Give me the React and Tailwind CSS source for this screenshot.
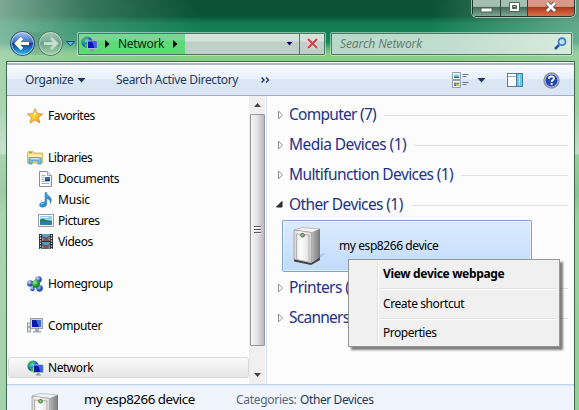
import React from "react";

const NetworkIcon = () => (
  <svg width="17" height="16" viewBox="0 0 17 16">
    <defs>
      <radialGradient id="globe" cx="35%" cy="30%">
        <stop offset="0" stopColor="#bdf3ff" />
        <stop offset=".5" stopColor="#2a9fdc" />
        <stop offset="1" stopColor="#1256a8" />
      </radialGradient>
    </defs>
    <circle cx="6" cy="6" r="5.6" fill="url(#globe)" />
    <path d="M1 4 Q3 1 6 .8 L7 2.5 4.500 4 4 6 1.500 6.500Z M3 8 L6 8 6.500 11 4 10.800Z" fill="#39b54a" />
    <rect x="6" y="4.500" width="10.500" height="8.500" fill="#a9b8d8" />
    <rect x="7" y="5.500" width="8.500" height="6.500" fill="#0c17b5" />
    <path d="M11 5.500h4.500v6.500h-2z" fill="#3d62e6" />
    <path d="M10 13h2.500v1.500h1.500v1h-5.500v-1h1.500z" fill="#8d98a8" />
  </svg>
);

const StarIcon = () => (
  <svg width="16" height="16" viewBox="0 0 16 16">
    <defs>
      <linearGradient id="star" x1="0" y1="0" x2="1" y2="1">
        <stop offset="0" stopColor="#ffe95c" />
        <stop offset=".5" stopColor="#ffd23a" />
        <stop offset="1" stopColor="#fb8b16" />
      </linearGradient>
    </defs>
    <path d="M8 .8 10 5.700 15.500 6 11.300 9.500 12.900 15 8 11.900 3.100 15 4.700 9.500 .5 6 6 5.700Z" fill="url(#star)" stroke="#e88420" strokeWidth=".9" strokeLinejoin="round" />
    <path d="M8 3 9.200 6.700 6 7Z" fill="#fff6b0" />
  </svg>
);

const LibrariesIcon = () => (
  <svg width="16" height="16" viewBox="0 0 16 16">
    <path d="M.5 13V2.500L1.500 1.500H6L7 3H15.500V13Z" fill="#f3d878" stroke="#cfae4e" strokeWidth=".8" />
    <path d="M1.500 4.500h13V7h-13z" fill="#fff0ae" />
    <path d="M2 2.600h3" stroke="#61b44b" strokeWidth="1" />
    <path d="M2 14V9Q2 7.500 3.500 7.500H12.500Q14 7.500 14 9V14H11V10.800H5V14Z" fill="#6dc0ea" stroke="#4a9ccc" strokeWidth=".9" />
    <path d="M3.500 8.700h9" stroke="#d5f2ff" />
  </svg>
);

const DocumentIcon = () => (
  <svg width="15" height="16" viewBox="0 0 15 16">
    <path d="M1.500 .5H9.500L13.500 4.500V15.500H1.500Z" fill="#fff" stroke="#8b8f94" />
    <path d="M9.500 .5V4.500H13.500" fill="#e9ecf0" stroke="#8b8f94" strokeWidth=".8" />
    <path d="M3.500 4.500h4M3.500 6.500h3M3.500 8.500h3M3.500 10.500h8M3.500 12.500h8" stroke="#9aa5c2" strokeWidth=".9" />
    <rect x="7" y="6" width="5" height="4" fill="#2f6fc0" />
    <path d="M7 10V8L9 9 12 7.500V10Z" fill="#16447f" />
  </svg>
);

const MusicIcon = () => (
  <svg width="16" height="16" viewBox="0 0 16 16">
    <defs>
      <linearGradient id="note" x1="0" y1="0" x2="1" y2="1">
        <stop offset="0" stopColor="#57bdf4" />
        <stop offset="1" stopColor="#1476bd" />
      </linearGradient>
    </defs>
    <path d="M7 .5H8.500Q9 3 11.500 4.500 14.800 7 12.300 11.500 13 7.500 8.700 6.500V12Q8.500 14.800 5 15.200 1.500 15.300 1.500 13 1.800 10.200 5.500 10L7 10.300Z" fill="url(#note)" stroke="#1872b3" strokeWidth=".5" />
    <path d="M3 12Q4 11 5.500 11.200" stroke="#a9e3ff" fill="none" />
  </svg>
);

const PictureIcon = () => (
  <svg width="16" height="13" viewBox="0 0 16 13">
    <rect x=".5" y=".5" width="15" height="12" fill="#fff" stroke="#969da3" />
    <rect x="2" y="2" width="12" height="9" fill="#8fd2f2" />
    <path d="M2 5.500Q5 4 8 6L14 7V8H2Z" fill="#2d7b61" />
    <path d="M2 8h12v3H2z" fill="#2580b5" />
    <path d="M2 3.500h8" stroke="#d8f3ff" />
  </svg>
);

const VideoIcon = () => (
  <svg width="14" height="15" viewBox="0 0 14 15">
    <rect width="14" height="15" fill="#2c3033" />
    <rect x="3" y="0" width="8" height="7" fill="#4ea6db" />
    <rect x="3" y="8" width="8" height="7" fill="#4a9bd0" />
    <path d="M3 1 5 3 9 3 11 1V3L9 5 11 7H3L5 5 3 3ZM3 9 6 11 9 11 11 9V11L9 13 10 15H4L5 13 3 11Z" fill="#7d5546" />
    <path d="M1.500 1v14M12.500 1v14" stroke="#e3e8ea" strokeWidth="1.200" strokeDasharray="1.300 1.300" />
  </svg>
);

const HomegroupIcon = () => (
  <svg width="16" height="16" viewBox="0 0 16 16">
    <defs>
      <radialGradient id="blueBall" cx="35%" cy="30%">
        <stop offset="0" stopColor="#c6dcfa" />
        <stop offset="1" stopColor="#2b51b5" />
      </radialGradient>
      <radialGradient id="greenBall" cx="35%" cy="30%">
        <stop offset="0" stopColor="#a6efa0" />
        <stop offset="1" stopColor="#178d2b" />
      </radialGradient>
    </defs>
    <circle cx="11.500" cy="3.500" r="3.300" fill="url(#blueBall)" />
    <circle cx="3.300" cy="7.500" r="3.200" fill="url(#blueBall)" />
    <circle cx="12.500" cy="12.300" r="3.400" fill="url(#blueBall)" />
    <circle cx="5.500" cy="13" r="2.300" fill="url(#blueBall)" />
    <circle cx="9" cy="8" r="4" fill="url(#greenBall)" />
  </svg>
);

const ComputerIcon = () => (
  <svg width="16" height="15" viewBox="0 0 16 15">
    <rect x=".5" y="5" width="3" height="9" fill="#d7d9d8" stroke="#909593" strokeWidth=".8" />
    <path d="M2 8v2" stroke="#36b336" />
    <rect x="3.500" y=".5" width="12" height="10" fill="#d0d3d5" stroke="#9ca0a4" />
    <rect x="5" y="2" width="9" height="7" fill="#0c19b0" />
    <path d="M9 2h5v7h-2z" fill="#4169df" />
    <path d="M8 11h4v2h2v1.500H6V13h2z" fill="#a5a9ad" />
  </svg>
);

const DeviceIcon = () => (
  <svg width="36" height="40" viewBox="0 0 36 40">
    <defs>
      <linearGradient id="front">
        <stop offset="0" stopColor="#d2d2d2" />
        <stop offset=".35" stopColor="#fff" />
        <stop offset="1" stopColor="#dadada" />
      </linearGradient>
      <linearGradient id="side">
        <stop offset="0" stopColor="#bcbcbc" />
        <stop offset="1" stopColor="#777" />
      </linearGradient>
    </defs>
    <path d="M20 38 34 27 29 28 25 31Z" fill="#64748b" opacity=".25" />
    <path d="M2 33 19 37 28 31V34L19 39 2 35.500Z" fill="#444" />
    <path d="M2 4 10 1.500 28 3 20 6.500Z" fill="#f4f4f4" stroke="#aaa" strokeWidth=".7" />
    <path d="M19.500 6.500 28 3V31L19 36.500Z" fill="url(#side)" />
    <path d="M2 4 19.500 6.500 19 36.500 2 33Z" fill="url(#front)" stroke="#999" strokeWidth=".7" />
    <path d="M4.500 8V33M17 9V35.500" stroke="#a8a8a8" strokeWidth=".8" />
    <path d="M4.500 8 17 9" stroke="#888" strokeWidth=".7" />
    <circle cx="10.500" cy="9.300" r="2.300" fill="#5d6b5a" />
    <circle cx="10.500" cy="9.300" r="1.300" fill="#6fe05a" />
  </svg>
);

const NavRow = ({ icon, label, sub, selected, spacing }) => (
  <div
    className={
      "flex h-[21px] w-[241px] shrink-0 items-center rounded-[3px] border " +
      (sub ? "pl-[28px] " : "pl-[18px] ") +
      (selected ? "border-[#d9d9d9] bg-linear-to-b from-[#fafafa] to-[#e6e6e6]" : "border-transparent")
    }
  >
    <span className={"mr-[4px] flex w-[17px] shrink-0 items-center " + (sub ? "justify-center" : "")}>{icon}</span>
    <span className={spacing}>{label}</span>
  </div>
);

const Group = ({ label, open, spacing }) => (
  <div className="flex h-[30px] shrink-0 items-center pl-[9px] pr-[6px] text-[15.5px] text-[#1e3287]">
    <svg className="mr-[5px] shrink-0" width="8" height="10" viewBox="0 0 8 10">
      {open ? <path d="M6 1.500V7H.5Z" fill="#333" stroke="#222" /> : <path d="M2.500 1V9L6.500 5Z" fill="#fff" stroke="#8e8e8e" />}
    </svg>
    <span className={spacing}>{label}</span>
    <span className="ml-2 mt-px h-px flex-1 bg-[#e0e0e0]" />
  </div>
);

const WindowButtons = () => (
  <div className="mr-[4px] flex h-[17px] w-[103px] rounded-b-[5px] border border-t-0 border-[#20372f] shadow-[0_0_0_1px_rgba(255,255,255,0.55)]">
    <div className="flex w-[28px] items-center justify-center border-r border-[#2c483e] bg-linear-to-b from-[#a5beb3] from-40% via-[#416c5b] via-45% to-[#80a696]">
      <svg width="13" height="16"><rect x="1" y="8" width="11" height="4" fill="#fff" stroke="#53605b" /></svg>
    </div>
    <div className="flex w-[27px] items-center justify-center border-r border-[#2c483e] bg-linear-to-b from-[#a5beb3] from-40% via-[#416c5b] via-45% to-[#80a696]">
      <svg width="13" height="16"><path d="M1.500 2.500H11.500V11.500H1.500ZM4.500 5.500V8.500H8.500V5.500Z" fill="#fff" fillRule="evenodd" stroke="#53605b" /></svg>
    </div>
    <div className="flex flex-1 items-center justify-center rounded-br-[4px] bg-linear-to-b from-[#d79a89] from-40% via-[#b13519] via-45% to-[#d5734b]">
      <svg width="14" height="16"><path d="M3 3 11 11M11 3 3 11" stroke="#5b4544" strokeWidth="4.500" /><path d="M3 3 11 11M11 3 3 11" stroke="#fff" strokeWidth="2.700" /></svg>
    </div>
  </div>
);

const TitleArea = () => (
  <div className="flex h-[61px] shrink-0 flex-col">
    <div className="flex h-[31px] justify-end"><WindowButtons /></div>
    <div className="flex h-[25px] items-center pl-[9px]">
      <svg className="shrink-0" width="69" height="28" viewBox="0 0 69 28">
        <defs>
          <linearGradient id="back" x1="0" y1="0" x2="0" y2="1">
            <stop offset="0" stopColor="#a9c9ec" />
            <stop offset=".45" stopColor="#3d6fc0" />
            <stop offset=".5" stopColor="#0c3f9c" />
            <stop offset="1" stopColor="#38c1f4" />
          </linearGradient>
          <linearGradient id="fwd" x1="0" y1="0" x2="0" y2="1">
            <stop offset="0" stopColor="#a7cdb8" />
            <stop offset=".5" stopColor="#6fa58a" />
            <stop offset="1" stopColor="#a5d4ae" />
          </linearGradient>
        </defs>
        <path d="M14 2H42V25H14Z" fill="#4a8066" opacity=".25" />
        <circle cx="13.500" cy="13.500" r="12" fill="url(#back)" stroke="#2c4a62" />
        <circle cx="13.500" cy="13.500" r="11" fill="none" stroke="#d6e8f8" strokeOpacity=".7" />
        <path d="M13 8 7.500 13.500 13 19M8 13.500H20" fill="none" stroke="#fff" strokeWidth="3.200" />
        <circle cx="41.500" cy="13.500" r="12" fill="url(#fwd)" stroke="#4f7562" />
        <circle cx="41.500" cy="13.500" r="11" fill="none" stroke="#d7eadd" strokeOpacity=".6" />
        <path d="M42 8 47.500 13.500 42 19M47 13.500H35" fill="none" stroke="#c4dfcf" strokeWidth="3" />
        <path d="M57.500 11.500H65.500L61.500 16Z" fill="#4cb9ee" stroke="#174b78" />
      </svg>
      <div className="flex h-[22px] w-[247px] items-center rounded-[1px] border border-[#4e7765] bg-[#c7d8cf] shadow-[0_0_0_1px_rgba(220,240,225,0.55)]">
        <div className="flex h-full w-[106px] items-center bg-linear-to-b from-[#79d795] from-30% to-[#5fd977] to-35% pl-[2px]">
          <NetworkIcon />
          <svg className="ml-[7px]" width="5" height="8"><path d="M0 0V8L4.500 4Z" fill="#000" /></svg>
          <span className="ml-[8px] w-[46px] text-[12px] tracking-[-0.3px] text-[#0c2c16]">Network</span>
          <svg className="ml-[9px]" width="5" height="8"><path d="M0 0V8L4.500 4Z" fill="#000" /></svg>
        </div>
        <div className="flex h-full flex-1 items-center justify-end bg-linear-to-b from-[#d5e1db] from-35% to-[#bed0c7] to-40% pr-[5px]">
          <svg width="9" height="6"><path d="M.5 .5H8.500L4.500 5Z" fill="#00006b" stroke="#eef5f2" strokeWidth=".6" /></svg>
        </div>
        <div className="flex h-full w-[25px] items-center justify-center border-l border-[#4e7765] bg-linear-to-b from-[#d5e1db] from-35% to-[#bed0c7] to-40%">
          <svg width="13" height="13"><path d="M2 2 11 11M11 2 2 11" stroke="#f1dddd" strokeWidth="4" /><path d="M2 2 11 11M11 2 2 11" stroke="#c94848" strokeWidth="2.200" /></svg>
        </div>
      </div>
      <div className="ml-[6px] flex h-[22px] w-[241px] items-center justify-between rounded-[1px] border border-[#4e7765] bg-linear-to-r from-[#b9d8c9] via-[#c1ddcf] to-[#d8ebdc] pl-[8px] pr-[4px] shadow-[0_0_0_1px_rgba(220,240,225,0.55)]">
        <span className="text-[12px] italic tracking-[-0.1px] text-[#667d72]">Search Network</span>
        <svg width="13" height="13" viewBox="0 0 13 13">
          <path d="M1 12 5 8" stroke="#2852a2" strokeWidth="2.500" />
          <circle cx="8" cy="4.700" r="3.500" fill="#bce5f1" stroke="#3478cb" strokeWidth="1.700" />
        </svg>
      </div>
    </div>
  </div>
);

const Toolbar = () => (
  <div className="flex h-[33px] shrink-0 items-center border-b border-[#a0aecb] bg-linear-to-b from-[#fafcff] from-5% via-[#e8effa] via-50% to-[#dbe6f5] to-52% text-[#1e395b] shadow-[inset_0_2px_0_#b2b4ce]">
    <span className="ml-[18px] mt-[2px] w-[47px] tracking-[-0.35px]">Organize</span>
    <svg className="ml-[5px] mt-[2px]" width="9" height="5"><path d="M.5 0H8.500L4.500 4.500Z" fill="#1e395b" /></svg>
    <span className="ml-[30px] mt-[2px] w-[123px] whitespace-nowrap tracking-[-0.33px]">Search Active Directory</span>
    <svg className="ml-[22px] mt-[2px]" width="9" height="6"><path d="M.5 .5 3 3 .5 5.500M5 .5 7.500 3 5 5.500" fill="none" stroke="#1e395b" strokeWidth="1.400" /></svg>
    <div className="ml-auto mt-[2px] flex items-center pr-[14px]">
      <svg width="17" height="17" viewBox="0 0 17 17">
        <path d="M.5 .5H8.500V7.500H.5ZM.5 8.500H8.500V15.500H.5Z" fill="#fff" stroke="#8c9cae" />
        <path d="M2 2.500h5v2H2z" fill="#83c9ed" />
        <path d="M2 4.500h5v1.500H2z" fill="#237357" />
        <path d="M2 10.500h2.500v2H2z" fill="#dc4c36" />
        <path d="M4.500 10.500H7v2H4.500z" fill="#4c9f3b" />
        <path d="M2 12.500h2.500V14H2z" fill="#3866ca" />
        <path d="M4.500 12.500H7V14H4.500z" fill="#e5ae2f" />
        <path d="M10.500 2.500H16.500M10.500 4.500H14.500M10.500 10.500H16.500M10.500 12.500H14.500" stroke="#69798e" />
      </svg>
      <svg className="ml-[8px]" width="9" height="5"><path d="M.5 0H8.500L4.500 4.500Z" fill="#1e395b" /></svg>
      <svg className="ml-[21px]" width="17" height="15" viewBox="0 0 17 15">
        <rect x=".5" y=".5" width="15" height="13" fill="#fff" stroke="#5e7991" />
        <path d="M1 3.500H10" stroke="#8fa7bc" />
        <rect x="9.500" y=".5" width="6" height="13" fill="#6fc4e2" stroke="#457d9d" />
        <path d="M12.500 2V12" stroke="#b5e7f5" />
      </svg>
      <svg className="ml-[19px]" width="17" height="17" viewBox="0 0 17 17">
        <circle cx="8.500" cy="8.500" r="7.500" fill="#2448b2" stroke="#8f959e" strokeWidth="1.400" />
        <circle cx="8.500" cy="8.500" r="6.400" fill="none" stroke="#dbe2ef" strokeWidth=".7" />
        <path d="M6 6.700Q6 4.300 8.500 4.300 11 4.300 11 6.300 11 7.500 9.700 8.200 8.600 8.800 8.600 10" fill="none" stroke="#fff" strokeWidth="1.800" />
        <rect x="7.700" y="11" width="1.900" height="1.900" fill="#fff" />
      </svg>
    </div>
  </div>
);

const Scrollbar = () => (
  <div className="flex w-[16px] flex-col items-center border-l border-[#ededed] bg-[#f0f0f0]">
    <div className="flex h-[18px] items-center"><svg width="7" height="4"><path d="M0 4H7L3.500 0Z" fill="#444" /></svg></div>
    <div className="flex h-[232px] w-[15px] items-center justify-center rounded-[1px] border border-[#97979b] bg-linear-to-r from-[#f5f5f5] via-[#e5e5e7] via-45% to-[#b9b9bf]">
      <div className="flex h-[8px] w-[7px] flex-col justify-between">
        <span className="h-[2px] border-b border-white bg-[#555]" />
        <span className="h-[2px] border-b border-white bg-[#555]" />
        <span className="h-[2px] border-b border-white bg-[#555]" />
      </div>
    </div>
    <div className="mt-[20px] flex h-[18px] items-center"><svg width="7" height="4"><path d="M0 0H7L3.500 4Z" fill="#444" /></svg></div>
  </div>
);

const ContextMenu = () => (
  <div className="absolute left-[81px] top-[163px] flex h-[88px] w-[212px] border border-[#979797] bg-[#f0f0f0] p-[2px] text-black shadow-[3px_3px_2px_rgba(0,0,0,0.5)]">
    <div className="w-[27px] shrink-0 border-r border-[#e0e0e0]" />
    <div className="flex flex-1 flex-col border-l border-white pr-[1px]">
      <div className="flex h-[27px] shrink-0 items-center border-b border-[#e0e0e0] pl-[4px] pb-[3px] font-bold tracking-[-0.33px]">View device webpage</div>
      <div className="flex h-[30px] shrink-0 items-center border-b border-[#e0e0e0] border-t border-t-white pl-[4px] pb-[1px] tracking-[-0.4px]">Create shortcut</div>
      <div className="flex h-[25px] shrink-0 items-center border-t border-white pl-[4px] pt-[1px] tracking-[-0.48px]">Properties</div>
    </div>
  </div>
);

export default function App() {
  return (
    <div className="flex h-[410px] w-[579px] flex-col overflow-hidden bg-[linear-gradient(90deg,rgba(185,215,199,0.65)_0px,rgba(150,200,175,0.3)_90px,transparent_200px,transparent_430px,rgba(165,209,183,0.55)_579px),linear-gradient(180deg,#0a5036_0px,#095337_16px,#117a52_23px,#15885c_42px,#65b879_49px,#86cf80_54px,#85d07e_105px,#a9d9a4_120px,#e0f0dc_154px,#82cd7e_155px,#68b66b_195px,#8ad386_215px,#7ccb78_410px)] font-['Noto_Sans','Open_Sans',sans-serif] text-[12px] leading-none">
      <TitleArea />
      <div className="ml-[6px] mr-[4px] flex h-[349px] flex-col border-x border-t border-[#3f674b] bg-[#fcfcfc]">
        <div className="h-px shrink-0 bg-white" />
        <Toolbar />
        <div className="flex h-[288px] shrink-0">
          <div className="flex w-[242px] flex-col pl-px pt-[9px] text-black">
            <NavRow icon={<StarIcon />} label="Favorites" spacing="tracking-[-0.5px]" />
            <div className="mt-[21px]"><NavRow icon={<LibrariesIcon />} label="Libraries" spacing="tracking-[-0.5px]" /></div>
            <NavRow sub icon={<DocumentIcon />} label="Documents" spacing="tracking-[-0.4px]" />
            <NavRow sub icon={<MusicIcon />} label="Music" spacing="tracking-[-0.2px]" />
            <NavRow sub icon={<PictureIcon />} label="Pictures" spacing="tracking-[-0.45px]" />
            <NavRow sub icon={<VideoIcon />} label="Videos" spacing="tracking-[-0.45px]" />
            <div className="mt-[21px]"><NavRow icon={<HomegroupIcon />} label="Homegroup" spacing="tracking-[-0.4px]" /></div>
            <div className="mt-[21px]"><NavRow icon={<ComputerIcon />} label="Computer" spacing="tracking-[-0.35px]" /></div>
            <div className="mt-[21px]"><NavRow selected icon={<NetworkIcon />} label="Network" spacing="tracking-[-0.45px]" /></div>
          </div>
          <Scrollbar />
          <div className="relative ml-px flex flex-1 flex-col border-l border-[#d4e3f5] pt-[4px]">
            <Group label="Computer (7)" spacing="tracking-[-0.73px]" />
            <Group label="Media Devices (1)" spacing="tracking-[-0.55px]" />
            <Group label="Multifunction Devices (1)" spacing="tracking-[-0.6px]" />
            <Group open label="Other Devices (1)" spacing="tracking-[-0.6px]" />
            <div className="ml-[15px] flex h-[52px] w-[250px] shrink-0 items-center rounded-[2px] border border-[#7da2ce] bg-linear-to-b from-[#dcebfc] to-[#c1dbfc] pl-[9px] text-black shadow-[inset_0_0_0_1px_rgba(255,255,255,0.5)]">
              <DeviceIcon />
              <span className="ml-[11px] tracking-[-0.42px]">my esp8266 device</span>
            </div>
            <div className="mt-[1px]"><Group label="Printers (2)" spacing="tracking-[-0.6px]" /></div>
            <Group label="Scanners (1)" spacing="tracking-[-0.75px]" />
            <ContextMenu />
          </div>
        </div>
        <div className="flex h-[26px] shrink-0 overflow-hidden border-t border-[#c5d5e9] bg-[#f0f4fc] shadow-[inset_0_1px_0_#dce7f5]">
          <div className="ml-[23px] mt-[7px] w-[36px] shrink-0"><DeviceIcon /></div>
          <span className="ml-[18px] mt-[8px] w-[152px] text-[13.300px] tracking-[-0.43px] text-black">my esp8266 device</span>
          <span className="mt-[9px] w-[64px] tracking-[-0.3px] text-[#5a6779]">Categories:</span>
          <span className="mt-[9px] tracking-[-0.4px] text-[#1e395b]">Other Devices</span>
        </div>
      </div>
    </div>
  );
}
